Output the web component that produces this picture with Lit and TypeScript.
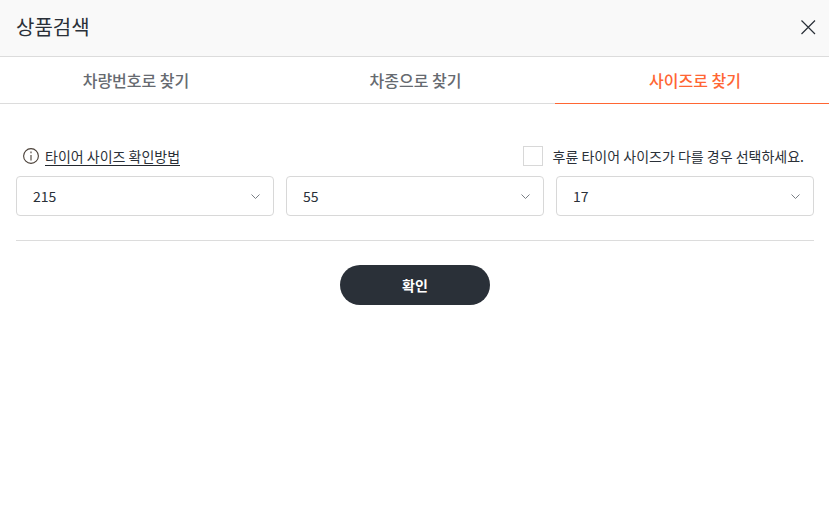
import { LitElement, html, css } from "lit";
import { customElement, state } from "lit/decorators.js";

const TABS = ["차량번호로 찾기", "차종으로 찾기", "사이즈로 찾기"];
const SIZES = ["215", "55", "17"];

@customElement("app-root")
export class AppRoot extends LitElement {
    @state()
    active: number = 2;

    static styles = css`
        :host {
            display: block;
            width: 829px;
            height: 523px;
            background: #fff;
            color: #22272e;
            font-family: "Noto Sans CJK KR", "Noto Sans", sans-serif;
            overflow: hidden;
        }

        .header {
            display: flex;
            align-items: center;
            justify-content: space-between;
            box-sizing: border-box;
            height: 57px;
            padding: 0 12px 3px 16px;
            background: #f9f9f9;
            border-bottom: 1px solid #dcdcdc;
        }

        .title {
            font-size: 20px;
            line-height: 30px;
            font-weight: 400;
            color: #2a3038;
        }

        .close {
            display: block;
            width: 18px;
            height: 18px;
        }

        .tabs {
            display: grid;
            grid-template-columns: 272px 283px 274px;
            height: 47px;
            box-sizing: border-box;
            border-bottom: 1px solid #dcdcdc;
        }

        .tab {
            display: flex;
            align-items: center;
            justify-content: center;
            height: 47px;
            box-sizing: border-box;
            padding-bottom: 1px;
            padding-left: 4px;
            font-size: 16px;
            font-weight: 500;
            color: #666a70;
        }

        .tab:first-child {
            padding-left: 0;
        }

        .tab.on {
            color: #ff6633;
            border-bottom: 1px solid #ff6633;
            padding-left: 6px;
        }

        .content {
            padding: 42px 15px 0 16px;
        }

        .options {
            display: flex;
            align-items: center;
            justify-content: space-between;
            height: 20px;
            margin-bottom: 10px;
            padding-left: 7px;
            padding-right: 10px;
            font-size: 14px;
            color: #2a3038;
        }

        .how {
            display: flex;
            align-items: center;
            gap: 6px;
        }

        .how svg {
            display: block;
            width: 16px;
            height: 16px;
        }

        .how span {
            line-height: 18px;
            border-bottom: 1px solid #22272e;
        }

        .check {
            display: flex;
            align-items: center;
            gap: 10px;
        }

        .box {
            box-sizing: border-box;
            width: 20px;
            height: 20px;
            border: 1px solid #d8d8d8;
            background: #fff;
        }

        .selects {
            display: grid;
            grid-template-columns: repeat(3, 1fr);
            gap: 12px;
        }

        .select {
            display: flex;
            align-items: center;
            justify-content: space-between;
            box-sizing: border-box;
            height: 40px;
            padding: 0 13px 0 16px;
            border: 1px solid #d8d8d8;
            border-radius: 4px;
            font-size: 14px;
            color: #2a3038;
        }

        .select svg {
            display: block;
            width: 9px;
            height: 5px;
        }

        .divider {
            height: 1px;
            margin-top: 24px;
            background: #dcdcdc;
        }

        .actions {
            display: flex;
            justify-content: center;
            padding-top: 24px;
        }

        .confirm {
            width: 150px;
            height: 40px;
            border: 0;
            border-radius: 20px;
            background: #2a3038;
            color: #fff;
            font-family: inherit;
            font-size: 14px;
            font-weight: 700;
        }
    `;

    render() {
        return html`
            <div class="header">
                <div class="title">상품검색</div>
                <svg class="close" viewBox="0 0 18 18" fill="none" stroke="#2a3038" stroke-width="1.2">
                    <path d="M2.5 2.5 L16 16 M16 2.5 L2.5 16"></path>
                </svg>
            </div>
            <div class="tabs">
                ${TABS.map((t, i) => html`<div class="tab ${i === this.active ? "on" : ""}">${t}</div>`)}
            </div>
            <div class="content">
                <div class="options">
                    <div class="how">
                        <svg viewBox="0 0 16 16" fill="none" stroke="#4a4038" stroke-width="1.1">
                            <circle cx="8" cy="8" r="7.4"></circle>
                            <path d="M8 7 V12.4 M8 3.6 V5.2"></path>
                        </svg>
                        <span>타이어 사이즈 확인방법</span>
                    </div>
                    <div class="check">
                        <div class="box"></div>
                        <div>후륜 타이어 사이즈가 다를 경우 선택하세요.</div>
                    </div>
                </div>
                <div class="selects">
                    ${SIZES.map((s) => html`
                        <div class="select">
                            <span>${s}</span>
                            <svg viewBox="0 0 9 5" fill="none" stroke="#7a7f85" stroke-width="1">
                                <path d="M0.5 0.5 L4.5 4.5 L8.5 0.5"></path>
                            </svg>
                        </div>
                    `)}
                </div>
                <div class="divider"></div>
                <div class="actions">
                    <button class="confirm">확인</button>
                </div>
            </div>
        `;
    }
}
